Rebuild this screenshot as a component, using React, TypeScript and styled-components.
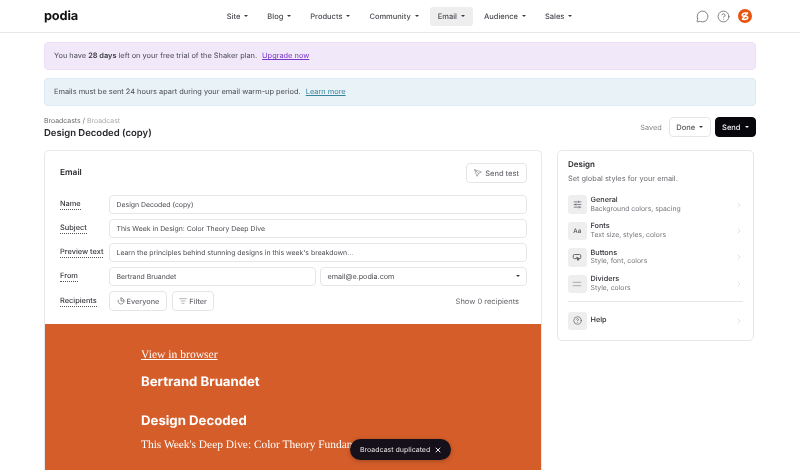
import React from "react";
import styled, { createGlobalStyle } from "styled-components";
import {
  MessageCircle, CircleHelp, Send, ListFilter, ChevronRight, SlidersHorizontal, X,
} from "lucide-react";

const Global = createGlobalStyle`
  html, body { margin: 0; padding: 0; height: 470px; overflow: hidden; background: #fff; }
  body { font-family: Inter, "Liberation Sans", sans-serif; color: #25252b; text-rendering: geometricPrecision; }
  * { box-sizing: border-box; }
`;

const Page = styled.div`
  width: 800px;
  height: 470px;
  overflow: hidden;
  position: relative;
  display: flex;
  flex-direction: column;
  will-change: transform;
`;

const TopBar = styled.header`
  height: 33px;
  flex: none;
  display: flex;
  align-items: center;
  padding: 0 48px 0 44px;
  border-bottom: 1px solid #e6e6e8;
`;

const Logo = styled.div`
  font-size: 12.8px;
  font-weight: 700;
  letter-spacing: -0.2px;
  color: #111;
  width: 174.7px;
`;

const NavList = styled.nav`
  display: flex;
  align-items: center;
  gap: 3px;
  flex: 1;
`;

const NavItem = styled.div<{ $active?: boolean }>`
  height: 19px;
  padding: 0 8px;
  display: flex;
  align-items: center;
  gap: 4px;
  font-size: 7.5px;
  font-weight: 500;
  color: #4a4a52;
  border-radius: 3px;
  background: ${(p) => (p.$active ? "#eeeeee" : "transparent")};
`;

const Caret = styled.span<{ $color?: string }>`
  display: inline-block;
  width: 0;
  height: 0;
  border-left: 2.3px solid transparent;
  border-right: 2.3px solid transparent;
  border-top: 2.6px solid ${(p) => p.$color ?? "#3a3a42"};
`;

const IconRow = styled.div`
  display: flex;
  align-items: center;
  gap: 8px;
  color: #66666c;
`;

const Main = styled.main`
  padding: 9px 44px 0;
  display: flex;
  flex-direction: column;
`;

const Alert = styled.div<{ $bg: string; $border: string }>`
  height: 27.5px;
  margin-bottom: 8.5px;
  display: flex;
  align-items: center;
  padding: 0 9px;
  gap: 5px;
  font-size: 7.4px;
  color: #4b4b53;
  border-radius: 4px;
  background: ${(p) => p.$bg};
  border: 1px solid ${(p) => p.$border};
  b { font-weight: 600; color: #38383f; }
`;

const AlertLink = styled.a<{ $color: string }>`
  color: ${(p) => p.$color};
  text-decoration: underline;
`;

const TitleBar = styled.div`
  height: 26px;
  display: flex;
  align-items: center;
  justify-content: space-between;
`;

const Crumbs = styled.div`
  font-size: 6.9px;
  color: #6a6a70;
  margin-bottom: 3px;
  span { color: #aaaaaf; }
`;

const Title = styled.h1`
  margin: 0;
  font-size: 9.5px;
  font-weight: 600;
  color: #25252b;
`;

const Actions = styled.div`
  display: flex;
  align-items: center;
  gap: 4px;
`;

const Saved = styled.span`
  font-size: 7.3px;
  color: #85858b;
  margin-right: 3px;
`;

const OutlineBtn = styled.button`
  height: 20px;
  padding: 0 6.5px;
  display: inline-flex;
  align-items: center;
  gap: 4px;
  font: 500 7.5px Inter, sans-serif;
  text-rendering: geometricPrecision;
  color: #55555c;
  background: #fff;
  border: 1px solid #e5e5e7;
  border-radius: 4px;
`;

const DarkBtn = styled(OutlineBtn)`
  background: #08080c;
  color: #f1f1f1;
  border-color: #08080c;
`;

const Columns = styled.div`
  display: flex;
  align-items: flex-start;
  margin-top: 10px;
  gap: 15px;
`;

const EmailCard = styled.section`
  width: 498px;
  height: 360px;
  flex: none;
  border: 1px solid #e8e8ea;
  border-bottom: none;
  border-radius: 5px 5px 0 0;
  overflow: hidden;
`;

const CardHead = styled.div`
  height: 44px;
  padding: 12px 14px 0 15px;
  display: flex;
  align-items: flex-start;
  justify-content: space-between;
`;

const CardTitle = styled.h2`
  margin: 5px 0 0;
  font-size: 8.4px;
  font-weight: 600;
  color: #2a2a30;
`;

const PlaneIcon = styled(Send)`
  transform: scaleX(-1);
`;

const TestBtn = styled(OutlineBtn)`
  gap: 3px;
  padding: 0 7px;
  color: #6b6b72;
`;

const Form = styled.div`
  padding: 0 14px 0 15px;
  display: grid;
  grid-template-columns: 44px 1fr;
  column-gap: 5px;
  row-gap: 5.5px;
  align-items: center;
`;

const Label = styled.label`
  justify-self: start;
  font-size: 7.4px;
  font-weight: 500;
  color: #37373d;
  white-space: nowrap;
  border-bottom: 1px dotted #55555c;
  line-height: 10px;
`;

const Field = styled.div`
  height: 18.5px;
  padding: 0 6.5px;
  display: flex;
  align-items: center;
  justify-content: space-between;
  font-size: 6.9px;
  color: #4b4b52;
  border: 1px solid #e6e6e8;
  border-radius: 4px;
  background: #fff;
  flex: 1;
`;

const FromRow = styled.div`
  display: flex;
  gap: 4px;
`;

const FromName = styled(Field)`
  flex: none;
  width: 207px;
`;

const FromEmail = styled(Field)`
  font-size: 7.2px;
`;

const RecipientRow = styled.div`
  display: flex;
  align-items: center;
  gap: 5px;
  height: 20px;
`;

const ChipBtn = styled(OutlineBtn)`
  height: 19.5px;
  font-size: 7.3px;
  color: #6b6b72;
  gap: 2px;
  padding: 0 6.5px;
`;

const ShowLink = styled.span`
  margin-left: auto;
  margin-right: 8px;
  font-size: 7.5px;
  color: #66666c;
`;

const Hero = styled.div`
  margin-top: 12.5px;
  height: 146px;
  background: #d45d29;
  color: #fff;
  padding: 24px 0 0 96px;
`;

const ViewLink = styled.a`
  display: block;
  font-family: "Liberation Serif", serif;
  font-size: 11.6px;
  text-decoration: underline;
  color: #fff;
`;

const HeroName = styled.div`
  margin-top: 13px;
  font-size: 13.2px;
  font-weight: 700;
`;

const HeroTitle = styled.div`
  margin-top: 23.5px;
  font-size: 13.2px;
  font-weight: 700;
`;

const HeroLine = styled.div`
  margin-top: 10px;
  font-family: "Liberation Serif", serif;
  font-size: 11.4px;
  white-space: nowrap;
`;

const DesignCard = styled.aside`
  width: 197px;
  height: 191px;
  flex: none;
  border: 1px solid #e6e6e8;
  border-radius: 5px;
  padding: 8px 10px 0 10px;
`;

const DesignTitle = styled.h2`
  margin: 0;
  font-size: 8px;
  font-weight: 600;
  color: #2a2a30;
`;

const DesignSub = styled.p`
  margin: 5px 0 8.5px;
  font-size: 7.4px;
  color: #6e6e74;
`;

const DesignRow = styled.div`
  height: 26.4px;
  display: flex;
  align-items: center;
  gap: 4px;
  color: #c2c2c6;
`;

const IconTile = styled.div`
  width: 18.5px;
  height: 18.5px;
  flex: none;
  border-radius: 3px;
  background: #eeeeef;
  color: #4e4e55;
  display: flex;
  align-items: center;
  justify-content: center;
  font-size: 6.2px;
  font-weight: 500;
`;

const RowText = styled.div`
  flex: 1;
  display: flex;
  flex-direction: column;
  line-height: 8.6px;
`;

const RowName = styled.span`
  font-size: 7.3px;
  font-weight: 500;
  color: #2f2f35;
`;

const RowDesc = styled.span`
  font-size: 6.85px;
  color: #77777d;
`;

const Rule = styled.hr`
  margin: 3.5px 0 6px;
  border: none;
  border-top: 1px solid #e6e6e8;
`;

const Toast = styled.div`
  position: absolute;
  left: 350px;
  top: 439px;
  width: 101px;
  height: 21px;
  border-radius: 11px;
  background: #16101a;
  color: #e8e8e8;
  font-size: 7px;
  white-space: nowrap;
  display: flex;
  align-items: center;
  justify-content: space-between;
  padding: 0 9px 0 10px;
  box-shadow: 0 1px 4px rgba(0, 0, 0, 0.25);
`;

const ClockIcon = () => (
  <svg width="8" height="8" viewBox="0 0 24 24" fill="none" stroke="currentColor" strokeWidth="2.2" strokeLinecap="round">
    <path d="M12 3a9 9 0 1 1-8.5 6" />
    <path d="M12 3v9h9" />
  </svg>
);

const ButtonIcon = () => (
  <svg width="10" height="10" viewBox="0 0 24 24" fill="none" stroke="currentColor" strokeWidth="2" strokeLinecap="round" strokeLinejoin="round">
    <path d="M10 16H6a3 3 0 0 1-3-3V9a3 3 0 0 1 3-3h12a3 3 0 0 1 3 3v4a3 3 0 0 1-3 3h-1" />
    <path d="M12 13l6 3-2.5 1-1 2.5z" fill="currentColor" />
  </svg>
);

const DividerIcon = () => (
  <svg width="10" height="10" viewBox="0 0 24 24" fill="none" stroke="#8c8c92" strokeWidth="1.6">
    <path d="M2 8h20M2 16h20" />
  </svg>
);

const Avatar = () => (
  <svg width="14" height="14" viewBox="0 0 14 14">
    <circle cx="7" cy="7" r="7" fill="#e8530e" />
    <path d="M4.2 10.6 9.8 3.4" stroke="#fff" strokeWidth="1.6" />
    <path d="M9.8 4.6C8 3.4 4.6 4 4.2 6c-.2 1 1 1.2 2.8 1.2s3 .4 2.8 1.6c-.3 1.6-3.6 2.2-5.6 1" stroke="#fff" strokeWidth="1.5" fill="none" />
  </svg>
);

const navItems = ["Site", "Blog", "Products", "Community", "Email", "Audience", "Sales"];

const designRows = [
  { name: "General", desc: "Background colors, spacing", icon: <SlidersHorizontal size={9} strokeWidth={1.8} /> },
  { name: "Fonts", desc: "Text size, styles, colors", icon: "Aa" },
  { name: "Buttons", desc: "Style, font, colors", icon: <ButtonIcon /> },
  { name: "Dividers", desc: "Style, colors", icon: <DividerIcon /> },
];

export default function App() {
  return (
    <Page>
      <Global />
      <TopBar>
        <Logo>podia</Logo>
        <NavList>
          {navItems.map((n) => (
            <NavItem key={n} $active={n === "Email"}>
              {n}
              <Caret />
            </NavItem>
          ))}
        </NavList>
        <IconRow>
          <MessageCircle size={13} strokeWidth={1.5} />
          <CircleHelp size={13} strokeWidth={1.5} />
          <Avatar />
        </IconRow>
      </TopBar>
      <Main>
        <Alert $bg="#f1e9f9" $border="#eadff6">
          <span>You have <b>28 days</b> left on your free trial of the Shaker plan.</span>
          <AlertLink $color="#7a35c9">Upgrade now</AlertLink>
        </Alert>
        <Alert $bg="#e8f2f7" $border="#d9ebf4">
          <span>Emails must be sent 24 hours apart during your email warm-up period.</span>
          <AlertLink $color="#38839f">Learn more</AlertLink>
        </Alert>
        <TitleBar>
          <div>
            <Crumbs>Broadcasts / <span>Broadcast</span></Crumbs>
            <Title>Design Decoded (copy)</Title>
          </div>
          <Actions>
            <Saved>Saved</Saved>
            <OutlineBtn>Done <Caret /></OutlineBtn>
            <DarkBtn>Send <Caret $color="#f1f1f1" /></DarkBtn>
          </Actions>
        </TitleBar>
        <Columns>
          <EmailCard>
            <CardHead>
              <CardTitle>Email</CardTitle>
              <TestBtn><PlaneIcon size={8} strokeWidth={1.6} /> Send test</TestBtn>
            </CardHead>
            <Form>
              <Label>Name</Label>
              <Field>Design Decoded (copy)</Field>
              <Label>Subject</Label>
              <Field>This Week in Design: Color Theory Deep Dive</Field>
              <Label>Preview text</Label>
              <Field>Learn the principles behind stunning designs in this week's breakdown...</Field>
              <Label>From</Label>
              <FromRow>
                <FromName>Bertrand Bruandet</FromName>
                <FromEmail>email@e.podia.com <Caret /></FromEmail>
              </FromRow>
              <Label>Recipients</Label>
              <RecipientRow>
                <ChipBtn><ClockIcon /> Everyone</ChipBtn>
                <ChipBtn><ListFilter size={8} strokeWidth={1.5} /> Filter</ChipBtn>
                <ShowLink>Show 0 recipients</ShowLink>
              </RecipientRow>
            </Form>
            <Hero>
              <ViewLink>View in browser</ViewLink>
              <HeroName>Bertrand Bruandet</HeroName>
              <HeroTitle>Design Decoded</HeroTitle>
              <HeroLine>This Week's Deep Dive: Color Theory Fundamentals</HeroLine>
            </Hero>
          </EmailCard>
          <DesignCard>
            <DesignTitle>Design</DesignTitle>
            <DesignSub>Set global styles for your email.</DesignSub>
            {designRows.map((r) => (
              <DesignRow key={r.name}>
                <IconTile>{r.icon}</IconTile>
                <RowText>
                  <RowName>{r.name}</RowName>
                  <RowDesc>{r.desc}</RowDesc>
                </RowText>
                <ChevronRight size={8} strokeWidth={1.5} />
              </DesignRow>
            ))}
            <Rule />
            <DesignRow>
              <IconTile><CircleHelp size={9} strokeWidth={1.6} /></IconTile>
              <RowText><RowName>Help</RowName></RowText>
              <ChevronRight size={8} strokeWidth={1.5} />
            </DesignRow>
          </DesignCard>
        </Columns>
      </Main>
      <Toast>
        Broadcast duplicated
        <X size={8} strokeWidth={3} />
      </Toast>
    </Page>
  );
}
